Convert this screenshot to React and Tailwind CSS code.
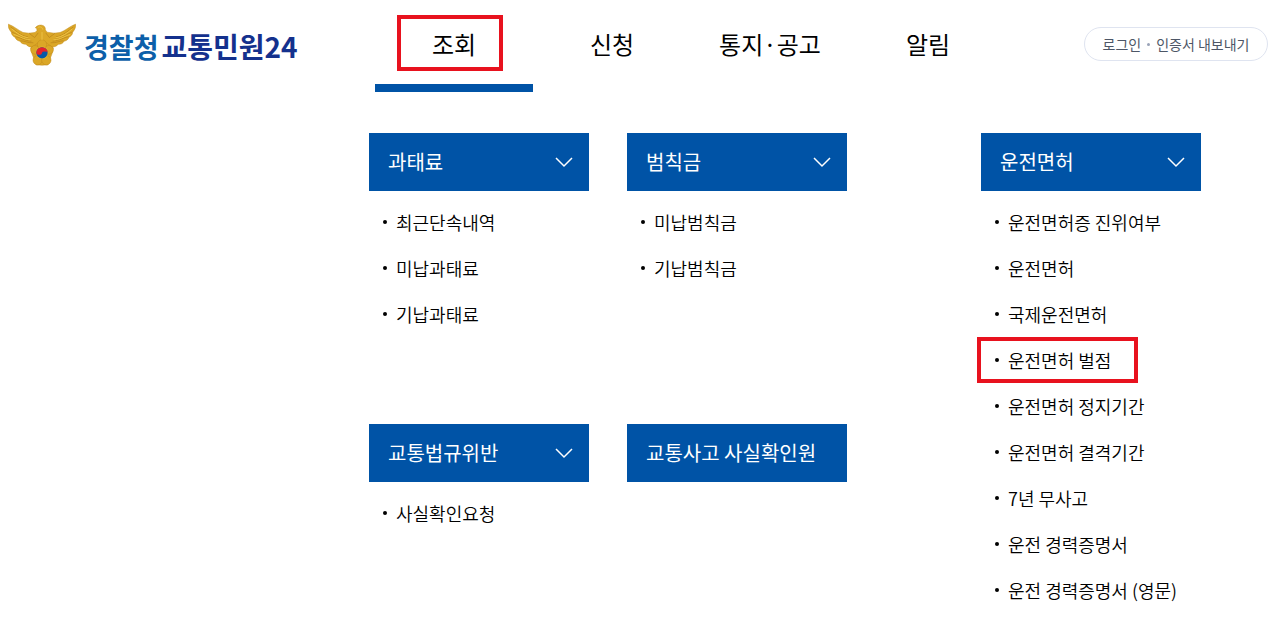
import React from 'react';

const navItems = ['조회', '신청', '통지·공고', '알림'];

const groups = [
  { title: '과태료', items: ['최근단속내역', '미납과태료', '기납과태료'] },
  { title: '범칙금', items: ['미납범칙금', '기납범칙금'] },
  { title: '교통법규위반', items: ['사실확인요청'] },
  { title: '교통사고 사실확인원', items: [] },
];

const license = {
  title: '운전면허',
  items: [
    '운전면허증 진위여부',
    '운전면허',
    '국제운전면허',
    '운전면허 벌점',
    '운전면허 정지기간',
    '운전면허 결격기간',
    '7년 무사고',
    '운전 경력증명서',
    '운전 경력증명서 (영문)',
  ],
};

function Emblem() {
  return (
    <svg viewBox="22 38 204 128" className="h-[43px] w-[68px] shrink-0" aria-hidden="true">
      <g fill="#dba727" stroke="#c08a1c" strokeWidth="1.5" strokeLinejoin="round">
        <path d="M23 41 C40 47 54 60 67 66 L84 68 L103 66 L109 60 L108 53 L104 52 C108 46 115 43 123 44 C131 45 135 51 134 58 L139 65 L160 68 L178 66 C194 61 207 47 225 41 C226 51 221 59 216 65 C216 72 211 77 205 80 C203 87 197 91 190 92 C187 99 180 102 173 101 C168 108 160 110 152 109 L97 109 C88 111 80 107 76 101 C68 102 61 98 58 92 C51 91 45 86 43 80 C37 77 32 72 32 65 C25 57 22 50 23 41 Z" />
        <path d="M124 88 L140 99 L158 112 L154 130 L148 145 L142 163 L124 164 L106 163 L100 145 L94 130 L90 112 L109 99 Z" />
        <circle cx="124" cy="102" r="14" />
        <circle cx="103" cy="118" r="13" />
        <circle cx="145" cy="118" r="13" />
        <circle cx="111" cy="149" r="14" />
        <circle cx="137" cy="149" r="14" />
      </g>
      <g fill="none" stroke="#b37c18" strokeWidth="1.8" strokeLinecap="round">
        <path d="M31 50 C48 62 58 75 81 79 M34 65 C50 70 60 83 85 86 M45 79 C59 80 70 91 91 92 M60 91 C71 90 80 98 97 97" />
        <path d="M217 50 C200 62 190 75 167 79 M214 65 C198 70 188 83 163 86 M203 79 C189 80 178 91 157 92 M188 91 C177 90 168 98 151 97" />
        <path d="M86 69 L102 81 L112 68 M162 69 L146 81 L136 68" />
      </g>
      <g fill="none" stroke="#efc84a" strokeWidth="2.5" strokeLinecap="round">
        <path d="M34 56 C50 68 61 78 82 82 M40 72 C55 75 65 86 88 88 M214 56 C198 68 187 78 166 82 M208 72 C193 75 183 86 160 88" />
        <path d="M112 51 C118 47 124 49 126 56 M124 66 L124 88" />
      </g>
      <circle cx="124" cy="127" r="19" fill="#e7b928" />
      <circle cx="124" cy="127" r="17" fill="#0759a8" />
      <path d="M107 127 A17 17 0 0 1 141 127 A8.5 4 0 0 0 124 127 A8.5 6 0 0 1 107 127 Z" fill="#e5232b" />
    </svg>
  );
}

function Chevron() {
  return (
    <svg viewBox="0 0 18 12" className="h-3 w-[18px]" fill="none" stroke="white" strokeWidth="1.5" aria-hidden="true">
      <path d="M1 2 L9 10 L17 2" />
    </svg>
  );
}

function MenuGroup({ title, items, marked }) {
  const bar = 'flex h-[58px] w-full items-center justify-between bg-[#0053a6] pl-[19px] pr-4 text-left text-xl text-white';
  return (
    <section>
      {items.length > 0 ? (
        <button type="button" aria-expanded="true" className={bar}>
          {title}
          <Chevron />
        </button>
      ) : (
        <a href="#" className={bar}>{title}</a>
      )}
      {items.length > 0 && (
        <ul className="pt-2">
          {items.map((item) => (
            <li key={item} className="relative flex h-[46px] items-center gap-[9px] pl-3.5 text-lg font-[350] whitespace-nowrap">
              <span className="size-1 rounded-full bg-black" />
              <a href="#">{item}</a>
              {item === marked && (
                <span className="pointer-events-none absolute inset-y-0 -left-1 w-[161px] border-4 border-[#e8121e]" />
              )}
            </li>
          ))}
        </ul>
      )}
    </section>
  );
}

export default function App() {
  return (
    <div className="bg-white font-['Noto_Sans_CJK_KR','Noto_Sans',sans-serif] text-black">
      <header className="flex h-[92px] items-start">
        <a href="#" className="flex h-[88px] w-[375px] shrink-0 items-center pl-2 font-bold whitespace-nowrap">
          <Emblem />
          <span className="flex items-baseline gap-[3px] pt-1 pl-2 text-[27px]">
            <span className="text-[#0c5fa9]">경찰청</span>
            <span className="text-[28px] text-[#14318d]">교통민원24</span>
          </span>
        </a>
        <nav aria-label="주 메뉴">
          <ul className="flex">
            {navItems.map((item, i) => (
              <li
                key={item}
                className={
                  i === 0
                    ? 'relative h-[92px] w-[158px] border-b-8 border-[#0053a6] pt-4'
                    : 'h-[92px] w-[158px] pt-4'
                }
              >
                <a href="#" className="flex h-14 items-center justify-center text-2xl">
                  {item}
                </a>
                {i === 0 && (
                  <span className="pointer-events-none absolute top-[15px] left-[22px] h-14 w-[106px] border-4 border-[#e8121e]" />
                )}
              </li>
            ))}
          </ul>
        </nav>
        <div className="mt-[27px] mr-3 ml-auto flex h-[34px] w-[184px] items-center justify-center gap-1.5 rounded-full border border-[#dfe4f0] text-sm whitespace-nowrap text-[#4d5666]">
          <a href="#">로그인</a>
          <span className="size-[3px] rounded-full bg-[#9aa3b8]" />
          <a href="#">인증서 내보내기</a>
        </div>
      </header>
      <main className="flex items-start pt-[41px] pl-[369px]">
        <div className="grid grid-cols-[220px_220px] grid-rows-[291px_auto] gap-x-[38px]">
          {groups.map((g) => (
            <MenuGroup key={g.title} title={g.title} items={g.items} />
          ))}
        </div>
        <div className="ml-[134px] w-[220px] shrink-0">
          <MenuGroup title={license.title} items={license.items} marked="운전면허 벌점" />
        </div>
      </main>
    </div>
  );
}
